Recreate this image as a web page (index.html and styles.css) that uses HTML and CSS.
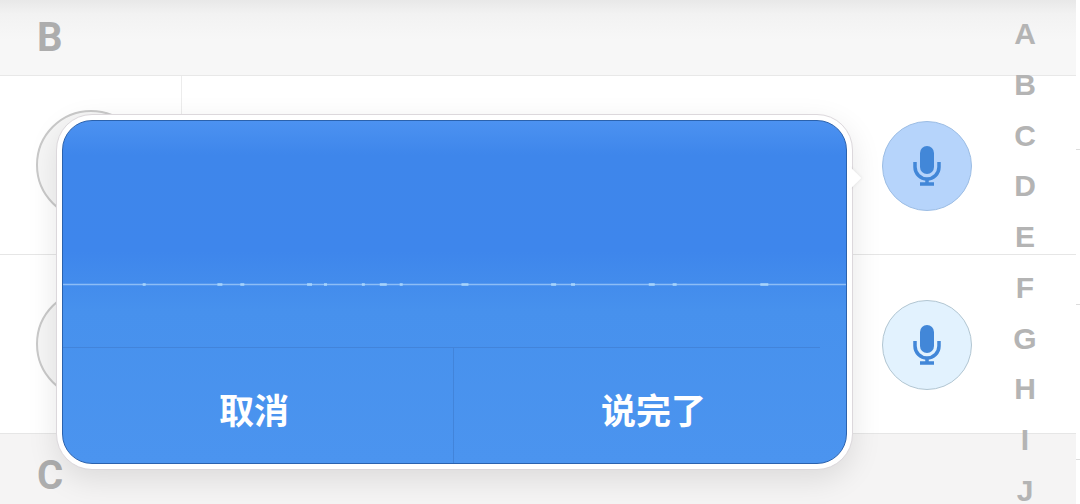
FILE: index.html
```html
<!DOCTYPE html>
<html lang="zh">
<head>
<meta charset="utf-8">
<title>语音</title>
<link rel="stylesheet" href="styles.css">
</head>
<body>
<main class="page">
  <div class="list">
    <div class="section section-first">B</div>
    <div class="row">
      <div class="avatar-cell"><span class="avatar"></span></div>
      <div class="row-body">
        <span class="mic mic-active">
          <svg class="mic-icon" viewBox="0 0 28 40"><rect x="7" y="0" width="14" height="28" rx="7"/><path d="M2 16v5a12 12 0 0 0 24 0v-5" class="mic-arc"/><path d="M14 32v7M7 38h14" class="mic-arc"/></svg>
        </span>
      </div>
    </div>
    <div class="row">
      <div class="avatar-cell"><span class="avatar"></span></div>
      <div class="row-body">
        <span class="mic">
          <svg class="mic-icon" viewBox="0 0 28 40"><rect x="7" y="0" width="14" height="28" rx="7"/><path d="M2 16v5a12 12 0 0 0 24 0v-5" class="mic-arc"/><path d="M14 32v7M7 38h14" class="mic-arc"/></svg>
        </span>
      </div>
    </div>
    <div class="section section-last">C</div>
  </div>

  <div class="track">
    <span class="tick"></span><span class="tick"></span><span class="tick"></span>
  </div>

  <nav class="index">
    <span>A</span><span>B</span><span>C</span><span>D</span><span>E</span><span>F</span><span>G</span><span>H</span><span>I</span><span>J</span>
  </nav>

  <div class="popup">
    <span class="popup-arrow"></span>
    <div class="panel">
      <div class="wave">
        <svg class="wave-line" viewBox="0 0 786 5" preserveAspectRatio="none"><path d="M0 2.500H786"/><path class="blips" d="M80 2.500h3M155 2.500h5M178 2.500h4M245 2.500h5M262 2.500h3M300 2.500h3M318 2.500h7M338 2.500h3M400 2.500h7M490 2.500h5M510 2.500h4M588 2.500h6M612 2.500h4M700 2.500h8"/></svg>
      </div>
      <div class="actions">
        <button class="action action-cancel">取消</button>
        <button class="action action-done">说完了</button>
      </div>
    </div>
  </div>
</main>
</body>
</html>
```
FILE: styles.css
```css
* { box-sizing: border-box; }
html, body { margin: 0; padding: 0; }
body { background: #fff; font-family: Roboto, "Liberation Sans", "Noto Sans CJK SC", sans-serif; }

.page { position: relative; width: 1080px; height: 504px; overflow: hidden; background: #fff; }

.list { display: flex; flex-direction: column; width: 1076px; height: 504px; }

.section {
  flex: 0 0 71px;
  display: flex;
  align-items: center;
  padding-left: 37px;
  background: #f5f4f4;
  color: #adadad;
  font-size: 40px;
  font-weight: 700;
}
.section-first {
  flex: 0 0 76px;
  border-bottom: 1px solid #e8e8e8;
  background: linear-gradient(#e8e8e8, #f2f2f2 14px, #f7f7f7 40px);
}
.section-last { padding-top: 11px; }

.row {
  flex: 0 0 179px;
  display: flex;
  border-bottom: 1px solid #e6e6e6;
  background: #fff;
}

.avatar-cell {
  flex: 0 0 182px;
  display: flex;
  align-items: center;
  padding-left: 36px;
  border-right: 1px solid #ececec;
}
.avatar {
  width: 110px;
  height: 110px;
  border-radius: 50%;
  border: 2px solid #c9c9c9;
  background: #f6f6f6;
}

.row-body {
  flex: 1;
  display: flex;
  align-items: center;
  justify-content: flex-end;
  padding-right: 104px;
  padding-top: 2px;
}

.mic {
  width: 90px;
  height: 90px;
  border-radius: 50%;
  border: 1px solid #b2c6d2;
  background: #e2f2fe;
  display: flex;
  align-items: center;
  justify-content: center;
}
.mic-active { background: #b6d4fb; border-color: #9cbde4; }
.mic-icon { width: 28px; height: 40px; fill: #4287d8; }
.mic-arc { fill: none; stroke: #4287d8; stroke-width: 3.500; }

.track {
  position: absolute;
  top: 149px;
  right: 0;
  width: 4px;
  height: 311px;
  display: flex;
  flex-direction: column;
  gap: 154px;
}
.tick { height: 1px; flex: 0 0 1px; background: #dcdcdc; }

.index {
  position: absolute;
  top: 9px;
  right: 41px;
  width: 28px;
  display: flex;
  flex-direction: column;
  align-items: center;
  color: #b4b4b4;
  font-family: "Liberation Sans", sans-serif;
  font-size: 30px;
  font-weight: 700;
}
.index span { flex: 0 0 50.750px; line-height: 50.750px; }

.popup {
  position: absolute;
  left: 56px;
  top: 114px;
  width: 797px;
  height: 356px;
  padding: 5px;
  background: #fff;
  border-radius: 36px;
  border: 1px solid #dcd8dc;
  box-shadow: 0 10px 30px rgba(0, 0, 0, 0.1);
}
.popup-arrow {
  position: absolute;
  right: -6px;
  top: 55px;
  width: 16px;
  height: 16px;
  background: #fff;
  transform: rotate(45deg);
  box-shadow: 1px -1px 3px rgba(0, 0, 0, 0.05);
}

.panel {
  position: relative;
  height: 100%;
  display: flex;
  flex-direction: column;
  border: 1px solid #2b62ad;
  border-radius: 30px;
  overflow: hidden;
  background: linear-gradient(#4c92f1, #3e86eb 34px, #3e86ec 130px, #4791ed 190px, #4b94ef);
}

.wave { flex: 0 0 227px; position: relative; }
.wave-line { position: absolute; left: 0; top: 161px; width: 100%; height: 5px; }
.wave-line path { fill: none; stroke: #8dbdf6; stroke-width: 1.500; }
.wave-line .blips { stroke: #a8d4fb; stroke-width: 2.500; }

.actions {
  flex: 1;
  display: flex;
  position: relative;
}
.actions::before {
  content: "";
  position: absolute;
  left: 0;
  right: 26px;
  top: -1px;
  height: 1px;
  background: #4284da;
}

.action {
  flex: 1;
  border: 0;
  padding: 6px 0 0;
  background: transparent;
  color: #fff;
  font-family: "Noto Sans CJK SC", sans-serif;
  font-size: 35px;
  font-weight: 700;
}
.action-cancel { flex: 0 0 391px; border-right: 1px solid #4284da; padding-right: 8px; }
.action-done { padding-left: 7px; }
```
